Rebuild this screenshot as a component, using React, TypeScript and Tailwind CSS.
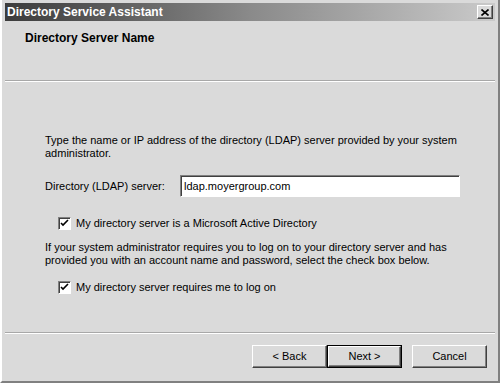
import React from "react";

function Check() {
  return (
    <span className="inline-flex h-[13px] w-[13px] items-center justify-center border border-t-[#808080] border-l-[#808080] border-b-white border-r-white bg-white shadow-[inset_1px_1px_0_#404040]">
      <svg width="9" height="9" viewBox="0 0 9 9">
        <path d="M1 4 L3 6 L8 1" stroke="#000" strokeWidth="1.6" fill="none" />
      </svg>
    </span>
  );
}

function Btn({ children, def }: { children: React.ReactNode; def?: boolean }) {
  return (
    <div className={"w-[75px] h-[23px] " + (def ? "border border-black" : "")}>
      <div className="h-full w-full flex items-center justify-center border border-t-white border-l-white border-b-[#404040] border-r-[#404040] shadow-[inset_-1px_-1px_0_#808080] bg-[#dadada] text-[11px]">
        {children}
      </div>
    </div>
  );
}

export default function App() {
  return (
    <div
      className="w-[500px] h-[383px] bg-[#dadada] text-black"
      style={{ fontFamily: '"Liberation Sans", Arial, sans-serif' }}
    >
      <div className="h-full w-full pt-[3px] pl-[3px] pr-[3px] pb-[2px] border-l-2 border-l-white border-r-2 border-r-[#808080] border-b-2 border-b-[#808080] flex flex-col">
        <div className="h-[18px] shrink-0 flex items-center justify-between pl-[2px] pr-[2px] bg-gradient-to-r from-[#3c3c3c] via-[#8a8a8a] to-[#cacaca]">
          <span className="text-white font-bold text-[12px] leading-none">Directory Service Assistant</span>
          <span className="h-[14px] w-[16px] shrink-0 flex items-center justify-center bg-[#dadada] border border-t-white border-l-white border-b-[#404040] border-r-[#404040] shadow-[inset_-1px_-1px_0_#808080]">
            <svg width="8" height="7" viewBox="0 0 8 7">
              <path d="M0.5 0.5 L7.5 6.5 M7.5 0.5 L0.5 6.5" stroke="#000" strokeWidth="1.6" />
            </svg>
          </span>
        </div>
        <div className="h-[59px] shrink-0 pl-[20px] pt-[9px] leading-[14px]">
          <span className="font-bold text-[12px]">Directory Server Name</span>
        </div>
        <div className="h-[2px] shrink-0 border-t border-t-[#a8a8a8] border-b border-b-white" />
        <div className="flex-1 pl-[40px] pt-[52px] text-[11px] leading-[13px]">
          <p>Type the name or IP address of the directory (LDAP) server provided by your system<br />administrator.</p>
          <div className="mt-[15px] flex items-center">
            <span className="w-[135px]">Directory (LDAP) server:</span>
            <div className="w-[280px] h-[22px] bg-white border border-t-[#808080] border-l-[#808080] border-b-white border-r-white shadow-[inset_1px_1px_0_#404040] flex items-center pl-[3px] text-[11px]">
              ldap.moyergroup.com
            </div>
          </div>
          <div className="mt-[20px] ml-[13px] flex items-center gap-[5px]">
            <Check />
            <span>My directory server is a Microsoft Active Directory</span>
          </div>
          <p className="mt-[11px]">If your system administrator requires you to log on to your directory server and has<br />provided you with an account name and password, select the check box below.</p>
          <div className="mt-[14px] ml-[13px] flex items-center gap-[5px]">
            <Check />
            <span>My directory server requires me to log on</span>
          </div>
        </div>
        <div className="h-[2px] shrink-0 border-t border-t-[#a8a8a8] border-b border-b-white" />
        <div className="h-[45px] shrink-0 flex items-center justify-end pr-[8px]">
          <Btn>&lt; Back</Btn>
          <Btn def>Next &gt;</Btn>
          <div className="w-[10px]" />
          <Btn>Cancel</Btn>
        </div>
      </div>
    </div>
  );
}
